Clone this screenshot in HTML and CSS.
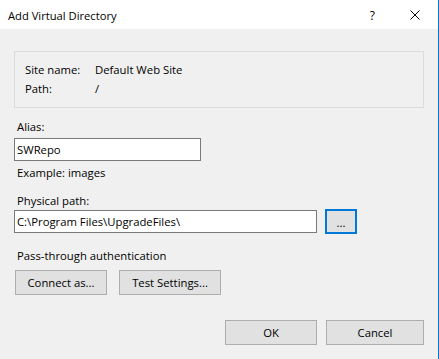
FILE: index.html
```html
<!DOCTYPE html>
<html>
<head>
  <link rel="stylesheet" href="styles.css">
</head>
<body>
  <div class="dialog">
    <div class="titlebar">
      <span class="title">Add Virtual Directory</span>
      <span class="help">?</span>
      <svg class="close" width="10" height="10" viewBox="0 0 10 10">
        <path d="M0.5 0.5 L9.5 9.5 M9.5 0.5 L0.5 9.5" stroke="#000" stroke-width="1" fill="none"/>
      </svg>
    </div>

    <div class="dialog-body">
      <div class="groupbox">
        <div class="info-row">
          <span class="info-label">Site name:</span>
          <span>Default Web Site</span>
        </div>
        <div class="info-row">
          <span class="info-label">Path:</span>
          <span>/</span>
        </div>
      </div>

      <label class="label label-alias">Alias:</label>
      <input type="text" class="textbox textbox-alias" value="SWRepo">
      <div class="label hint">Example: images</div>

      <label class="label label-path">Physical path:</label>
      <div class="path-row">
        <input type="text" class="textbox textbox-path" value="C:\Program Files\UpgradeFiles\">
        <button class="button button-browse">...</button>
      </div>

      <div class="label label-auth">Pass-through authentication</div>
      <div class="auth-row">
        <button class="button button-connect">Connect as...</button>
        <button class="button button-test">Test Settings...</button>
      </div>

      <div class="footer">
        <button class="button button-ok">OK</button>
        <button class="button button-cancel">Cancel</button>
      </div>
    </div>
  </div>
</body>
</html>
```

FILE: styles.css
```css
:root {
  --face: #f0f0f0;
  --button: #e1e1e1;
  --button-border: #adadad;
  --input-border: #7a7a7a;
  --group-border: #dcdcdc;
  --accent: #0078d7;
}

* {
  box-sizing: border-box;
}

body {
  margin: 0;
  font-family: "Open Sans", "Noto Sans", sans-serif;
  font-size: 11.3px;
  color: #000;
  background: var(--face);
}

.dialog {
  width: 439px;
  height: 359px;
  display: flex;
  flex-direction: column;
  border-right: 1px solid var(--accent);
  background: var(--face);
}

.titlebar {
  height: 29px;
  display: flex;
  align-items: center;
  background: #ffffff;
  padding-left: 8px;
}

.title {
  flex: 1;
  font-size: 11.2px;
  margin-top: 1px;
}

.help {
  font-size: 12px;
  margin-right: 35px;
  margin-top: 1px;
}

.close {
  margin-right: 18px;
  margin-top: 1px;
}

.dialog-body {
  flex: 1;
  display: flex;
  flex-direction: column;
  align-items: flex-start;
  padding: 22px 0 0 14px;
}

.groupbox {
  width: 410px;
  height: 57px;
  border: 1px solid var(--group-border);
  padding: 10px 0 0 10px;
}

.info-row {
  display: flex;
  line-height: 16px;
}

.info-row + .info-row {
  margin-top: 3px;
}

.info-label {
  width: 70px;
}

.label {
  line-height: 16px;
  margin-left: 3px;
}

.label-alias {
  margin-top: 11px;
}

.textbox {
  height: 23px;
  margin: 0;
  padding: 0 2px;
  border: 1px solid var(--input-border);
  background: #ffffff;
  font: inherit;
  color: #000;
  outline: none;
}

.textbox-alias {
  width: 187px;
  margin-top: 3px;
}

.hint {
  margin-top: 4px;
}

.label-path {
  margin-top: 12px;
}

.path-row {
  display: flex;
  align-items: center;
}

.textbox-path {
  width: 303px;
}

.button {
  height: 25px;
  margin: 0;
  padding: 0;
  border: 1px solid var(--button-border);
  background: var(--button);
  font: inherit;
  color: #000;
}

.button-browse {
  width: 32px;
  margin-left: 8px;
  padding-top: 2px;
  border: 2px solid var(--accent);
}

.label-auth {
  margin-top: 14px;
}

.auth-row {
  display: flex;
  gap: 12px;
  margin: 6px 0 0 1px;
}

.button-connect {
  width: 92px;
}

.button-test {
  width: 102px;
}

.footer {
  width: 410px;
  display: flex;
  justify-content: flex-end;
  gap: 9px;
  margin-top: 25px;
}

.button-ok {
  width: 92px;
}

.button-cancel {
  width: 98px;
}
```
